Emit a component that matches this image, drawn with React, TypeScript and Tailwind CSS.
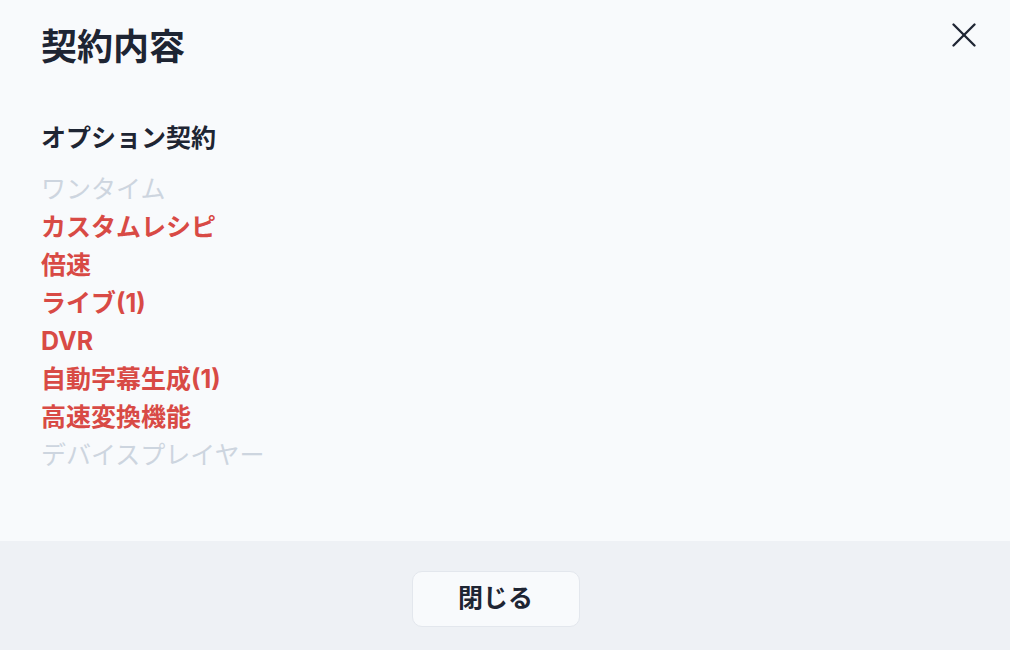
const items: { label: string; active: boolean }[] = [
  { label: 'ワンタイム', active: false },
  { label: 'カスタムレシピ', active: true },
  { label: '倍速', active: true },
  { label: 'ライブ(1)', active: true },
  { label: 'DVR', active: true },
  { label: '自動字幕生成(1)', active: true },
  { label: '高速変換機能', active: true },
  { label: 'デバイスプレイヤー', active: false },
];

function CloseIcon() {
  return (
    <svg width="24" height="24" viewBox="0 0 24 24" fill="none" stroke="currentColor" strokeWidth="2.3" strokeLinecap="round">
      <line x1="1.5" y1="1.5" x2="22.5" y2="22.5" />
      <line x1="22.5" y1="1.5" x2="1.5" y2="22.5" />
    </svg>
  );
}

export default function App() {
  return (
    <div
      className="w-[1010px] h-[650px] flex flex-col bg-[#f8fafc] text-[#1e2533]"
      style={{ fontFamily: 'Inter, "Noto Sans CJK JP", sans-serif' }}
    >
      {/* Body */}
      <div className="flex-1 flex flex-col px-[41px] pt-[24px]">
        <div className="flex items-start justify-between">
          <h1 className="text-[36px] leading-[46px] font-semibold">契約内容</h1>
          <button className="-mt-[1px] -mr-[7px] text-[#1e2533]">
            <CloseIcon />
          </button>
        </div>

        <section className="mt-[52px] flex flex-col">
          <h3 className="text-[25px] leading-[32px] font-bold mb-[16px]">オプション契約</h3>
          <ul className="flex flex-col">
            {items.map((item) => (
              <li
                key={item.label}
                className={`text-[25px] leading-[38px] ${
                  item.active ? 'font-bold text-[#d84a45]' : 'font-normal text-[#cdd5df]'
                }`}
              >
                {item.label}
              </li>
            ))}
          </ul>
        </section>
      </div>

      {/* Footer */}
      <div className="h-[109px] bg-[#eef1f5] flex items-start justify-center pt-[30px] pr-[19px]">
        <button className="w-[168px] h-[56px] rounded-[10px] border border-[#e3e7ed] bg-[#f8fafc] text-[25px] font-bold">
          閉じる
        </button>
      </div>
    </div>
  );
}
